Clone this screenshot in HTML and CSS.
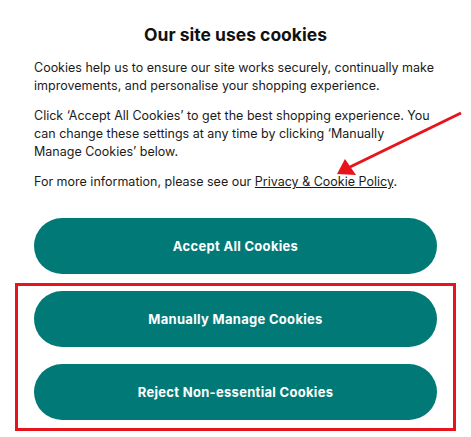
FILE: index.html
```html
<!DOCTYPE html>
<html lang="en">
<head>
    <meta charset="UTF-8">
    <title>Cookie Banner</title>
    <link rel="stylesheet" href="styles.css">
</head>
<body>
<div class="cookie-panel">
    <h2 class="cookie-title">Our site uses cookies</h2>
    <p class="cookie-text">Cookies help us to ensure our site works securely, continually make improvements, and personalise your shopping experience.</p>
    <p class="cookie-text">Click ‘Accept All Cookies’ to get the best shopping experience. You can change these settings at any time by clicking ‘Manually<br>Manage Cookies’ below.</p>
    <p class="cookie-text">For more information, please see our <a href="#" class="policy-link">Privacy &amp; Cookie Policy</a>.</p>
    <button class="cookie-btn accept-btn">Accept All Cookies</button>
    <div class="highlight-box">
        <button class="cookie-btn">Manually Manage Cookies</button>
        <button class="cookie-btn">Reject Non-essential Cookies</button>
    </div>
    <!--annotation arrow-->
    <svg class="note-arrow" width="471" height="437" viewBox="0 0 471 437">
        <line x1="461" y1="113" x2="350" y2="167" stroke="#e8141b" stroke-width="3"/>
        <polygon points="337,174 345,159 356,175" fill="#e8141b"/>
    </svg>
</div>
</body>
</html>
```

FILE: styles.css
```css
body {
    margin: 0;
    background-color: #ffffff;
    font-family: "Inter", "Noto Sans", sans-serif;
    color: #1b1b1b;
}

.cookie-panel {
    position: relative;
    padding: 23px 34px 0 34px;
    height: 414px;
}

.cookie-title {
    margin: 0 0 12px 0;
    text-align: center;
    font-size: 17.5px;
    font-weight: 700;
    line-height: 24px;
    color: #111111;
}

.cookie-text {
    margin: 0 0 12px 0;
    font-size: 12.5px;
    line-height: 18px;
}

.policy-link {
    color: #1b1b1b;
    text-decoration: underline;
}

.cookie-btn {
    display: block;
    width: 100%;
    height: 56px;
    border: none;
    border-radius: 28px;
    background-color: #017a77;
    color: #ffffff;
    font-family: "Inter", "Noto Sans", sans-serif;
    font-size: 13px;
    font-weight: 700;
    letter-spacing: 0.3px;
}

.accept-btn {
    margin-top: 27px;
}

.highlight-box {
    margin: 9px -19px 0 -19px;
    padding: 5px 16px 8px 16px;
    border: 3px solid #e8141b;
    display: flex;
    flex-direction: column;
    gap: 17px;
}

.note-arrow {
    position: absolute;
    left: 0;
    top: 0;
    pointer-events: none;
}
```
